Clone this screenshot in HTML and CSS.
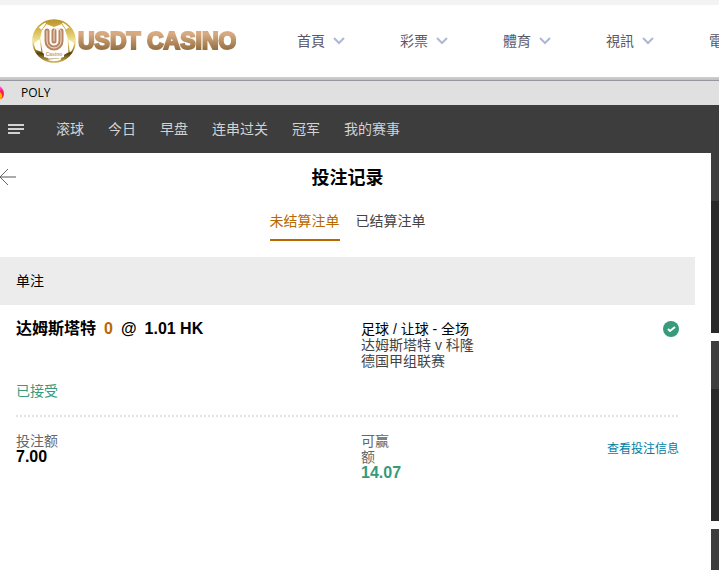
FILE: index.html
```
<!DOCTYPE html>
<html lang="zh-CN">
<head>
<meta charset="utf-8">
<meta name="viewport" content="width=device-width, initial-scale=1">
<title>USDT CASINO</title>
<link rel="stylesheet" href="styles.css">
</head>
<body>
<header class="site-header" lang="zh-TW">
  <a class="brand" href="#">
    <svg class="brand-ball" viewBox="0 0 46 46" aria-hidden="true">
      <defs>
        <linearGradient id="gold" gradientUnits="userSpaceOnUse" x1="0" y1="2" x2="0" y2="44">
          <stop offset="0" stop-color="#b9932b"/>
          <stop offset=".3" stop-color="#dcc25f"/>
          <stop offset=".52" stop-color="#f3e6a0"/>
          <stop offset=".66" stop-color="#c29c35"/>
          <stop offset=".8" stop-color="#594209"/>
          <stop offset="1" stop-color="#cbb052"/>
        </linearGradient>
        <linearGradient id="bronze" x1="0" y1="0" x2="0" y2="1">
          <stop offset="0" stop-color="#d6a47c"/>
          <stop offset="1" stop-color="#a67a4c"/>
        </linearGradient>
        <clipPath id="ball"><circle cx="23" cy="23" r="21"/></clipPath>
      </defs>
      <circle cx="23" cy="23" r="21" fill="#fffefa"/>
      <g clip-path="url(#ball)" fill="url(#gold)">
        <path d="M13 0h20l-2 6-8 3-8-3z"/>
        <path d="M0 14l7-5 4 3-2 9-9 6z"/>
        <path d="M46 12l-9-2-3 2 3 9 9 6z"/>
        <path d="M0 30l11 4 7 7-2 5-12-3z"/>
        <path d="M31 38l7-4 8-2-6 10-12 4z"/>
      </g>
      <g fill="none" stroke="url(#gold)">
        <circle cx="23" cy="23" r="21" stroke-width="1.6"/>
        <path d="M15 6l-4 6M31 6l4 6M9 21l2 13M37 21l1 13M18 41l10-1 3-2" stroke-width="1"/>
      </g>
      <path d="M16 13v11a7 7 0 0 0 14 0V13M23 13v9" fill="none" stroke="#fff" stroke-width="8" stroke-linecap="round"/>
      <path d="M23 13v10M16 13v10a7 7 0 0 0 14 0V13" fill="none" stroke="#b98560" stroke-width="5" stroke-linecap="round"/>
      <path d="M16 13v10a7 7 0 0 0 14 0V13a3 3 0 0 0-3-2 3 3 0 0 0-4 2v10" fill="none" stroke="#f5e2d2" stroke-width="1" stroke-linecap="round"/>
      <path d="M13 35q10 3 20 0v4q-10 3-20 0z" fill="#fff"/>
      <text x="23" y="38" class="ball-text">Casino</text>
    </svg>
    <span class="brand-name">USDT CASINO</span>
  </a>
  <nav class="site-nav">
    <a href="#">首頁<svg viewBox="0 0 12 8" aria-hidden="true"><path d="M1 1l5 5 5-5"/></svg></a>
    <a href="#">彩票<svg viewBox="0 0 12 8" aria-hidden="true"><path d="M1 1l5 5 5-5"/></svg></a>
    <a href="#">體育<svg viewBox="0 0 12 8" aria-hidden="true"><path d="M1 1l5 5 5-5"/></svg></a>
    <a href="#">視訊<svg viewBox="0 0 12 8" aria-hidden="true"><path d="M1 1l5 5 5-5"/></svg></a>
    <a href="#">電</a>
  </nav>
</header>

<div class="window-bar">
  <svg class="flame" viewBox="0 0 4 14" aria-hidden="true">
    <defs><linearGradient id="fire" x1="0" y1="0" x2="0" y2="1">
      <stop offset="0" stop-color="#ff6cf0"/><stop offset=".4" stop-color="#ff126f"/><stop offset="1" stop-color="#ff3b12"/>
    </linearGradient></defs>
    <path d="M0 0c2 2 4 4 4 8 0 3-2 5-4 5z" fill="url(#fire)"/>
    <path d="M0 6c1 1 2 2 2 4s-1 3-2 3z" fill="#ffb400"/>
  </svg>
  <span>POLY</span>
</div>

<nav class="sport-nav">
  <button class="menu" type="button" aria-label="菜单">
    <svg viewBox="0 0 16 10" aria-hidden="true"><path d="M0 0h16v2H0zM0 4h16v2H0zM0 8h12v2H0z"/></svg>
  </button>
  <a href="#">滚球</a>
  <a href="#">今日</a>
  <a href="#">早盘</a>
  <a href="#">连串过关</a>
  <a href="#">冠军</a>
  <a href="#">我的赛事</a>
</nav>

<div class="layout">
  <main class="records">
    <div class="title-row">
      <button class="back" type="button" aria-label="返回">
        <svg viewBox="0 0 16 16" aria-hidden="true"><path class="shaft" d="M1 8h15"/><path d="M8 0L0 8l8 8"/></svg>
      </button>
      <h1>投注记录</h1>
    </div>
    <div class="tabs">
      <button class="tab active" type="button">未结算注单</button>
      <button class="tab" type="button">已结算注单</button>
    </div>
    <h2 class="group">单注</h2>
    <article class="bet">
      <div class="row summary">
        <div>
          <p class="pick">达姆斯塔特 <b>0</b> <span>@</span> <span>1.01 HK</span></p>
        </div>
        <div class="match">
          <p class="market">足球 / 让球 - 全场</p>
          <p>达姆斯塔特 v 科隆</p>
          <p>德国甲组联赛</p>
        </div>
        <svg class="check" viewBox="0 0 16 16" aria-hidden="true"><circle cx="8" cy="8" r="8"/><path d="M5 8l2 2 5-4"/></svg>
      </div>
      <p class="status">已接受</p>
      <svg class="divider" aria-hidden="true"><line x1="0" y1="1" x2="100%" y2="1"/></svg>
      <div class="row amounts">
        <div><p>投注额</p><p class="stake">7.00</p></div>
        <div class="win"><p>可赢额</p><p class="payout">14.07</p></div>
        <a class="detail" href="#">查看投注信息</a>
      </div>
    </article>
  </main>
  <aside class="cards">
    <div class="card"></div>
    <div class="card"></div>
    <div class="card"></div>
  </aside>
</div>
</body>
</html>
```
FILE: styles.css
```
* {
  box-sizing: border-box;
}

body {
  margin: 0;
  height: 100vh;
  overflow: hidden;
  display: flex;
  flex-direction: column;
  background: #fff;
  color: #000;
  font: 14px/16px "Liberation Sans", "Noto Sans CJK SC", sans-serif;
}

p, h1, h2 {
  margin: 0;
}

a {
  color: inherit;
  text-decoration: none;
}

button {
  padding: 0;
  border: 0;
  background: none;
  color: inherit;
  font: inherit;
  cursor: pointer;
}

svg {
  display: block;
  flex: none;
}

.site-header {
  flex: none;
  display: flex;
  align-items: center;
  height: 77px;
  overflow: hidden;
  border-top: 5px solid #f3f3f3;
  padding-left: 31px;
  font-family: "Liberation Sans", "Noto Sans CJK TC", sans-serif;
}

.brand {
  display: flex;
  align-items: center;
  flex: none;
  gap: 1px;
  width: 266px;
}

.brand-ball {
  width: 46px;
  height: 46px;
}

.ball-text {
  font: bold 5px "Liberation Sans", sans-serif;
  fill: #c99a77;
  text-anchor: middle;
}

.brand-name {
  font-size: 23px;
  line-height: 28px;
  font-weight: bold;
  white-space: nowrap;
  color: transparent;
  background: linear-gradient(#d8aa81 25%, #8f6c3e 85%);
  background-clip: text;
  -webkit-background-clip: text;
  -webkit-text-stroke: 2px transparent;
}

.site-nav {
  display: flex;
  gap: 55px;
  color: #5b5668;
}

.site-nav a {
  display: flex;
  align-items: center;
  flex: none;
  gap: 8px;
}

.site-nav svg {
  width: 12px;
  height: 8px;
  fill: none;
  stroke: #aeb8d6;
  stroke-width: 2;
}

.window-bar {
  flex: none;
  display: flex;
  align-items: center;
  gap: 17px;
  height: 28px;
  padding-top: 4px;
  background: linear-gradient(#d0d0d0, #c0c0c2 3px, #96969e 3px 4px, #e0e0e0 4px);
  font: 12px/16px "Open Sans", "Noto Sans", sans-serif;
}

.flame {
  width: 4px;
  height: 14px;
}

.sport-nav {
  flex: none;
  display: flex;
  align-items: center;
  gap: 24px;
  height: 48px;
  padding-left: 8px;
  background: #3d3d3d;
  color: #d2d2d2;
}

.menu {
  margin-right: 8px;
}

.menu svg {
  width: 16px;
  height: 10px;
  fill: #d2d2d2;
}

.layout {
  flex: 1;
  min-height: 0;
  overflow: hidden;
  display: flex;
}

.records {
  flex: 1;
  padding-right: 16px;
}

.title-row {
  display: grid;
  grid-template-columns: 16px 1fr 16px;
  align-items: center;
  height: 48px;
}

.back svg {
  width: 16px;
  height: 16px;
  fill: none;
  stroke: #666;
  stroke-width: 1;
}

.back .shaft {
  stroke: #aaa;
  stroke-width: 2;
}

h1 {
  padding-top: 2px;
  font-size: 18px;
  line-height: 24px;
  text-align: center;
}

.tabs {
  display: flex;
  justify-content: center;
  gap: 16px;
  height: 40px;
  margin-bottom: 16px;
}

.tab {
  padding-top: 2px;
  border-bottom: 2px solid transparent;
  color: #444;
}

.tab.active {
  border-color: #b86800;
  color: #b86800;
}

.group {
  height: 48px;
  padding-left: 16px;
  background: #ececec;
  font-size: 14px;
  line-height: 48px;
  font-weight: normal;
}

.bet {
  padding: 16px 0 0 16px;
}

.row {
  display: grid;
  grid-template-columns: 345px 1fr auto;
  padding-right: 16px;
}

.pick {
  display: flex;
  gap: 8px;
  font-size: 16px;
  font-weight: bold;
}

.pick b {
  color: #b86800;
}

.match {
  color: #444;
}

.market {
  color: #000;
}

.check {
  width: 16px;
  height: 16px;
  fill: #359b7b;
}

.check path {
  fill: none;
  stroke: #fff;
  stroke-width: 2;
}

.status {
  margin-top: 14px;
  color: #359b7b;
}

.divider {
  width: calc(100% - 16px);
  height: 2px;
  margin: 16px 0;
}

.divider line {
  stroke: #e2e2e2;
  stroke-width: 2;
  stroke-dasharray: 2 2;
}

.amounts {
  color: #666;
}

.stake,
.payout {
  font-size: 16px;
  font-weight: bold;
}

.stake {
  color: #000;
}

.payout {
  color: #359b7b;
}

.win {
  width: 40px;
}

.detail {
  align-self: start;
  padding-top: 8px;
  color: #007da4;
  font-size: 12px;
}

.cards {
  flex: none;
  display: flex;
  flex-direction: column;
  gap: 8px;
  width: 8px;
}

.card {
  flex: none;
  height: 180px;
  border-top: 48px solid #3d3d3d;
  background: #292929;
}
```
